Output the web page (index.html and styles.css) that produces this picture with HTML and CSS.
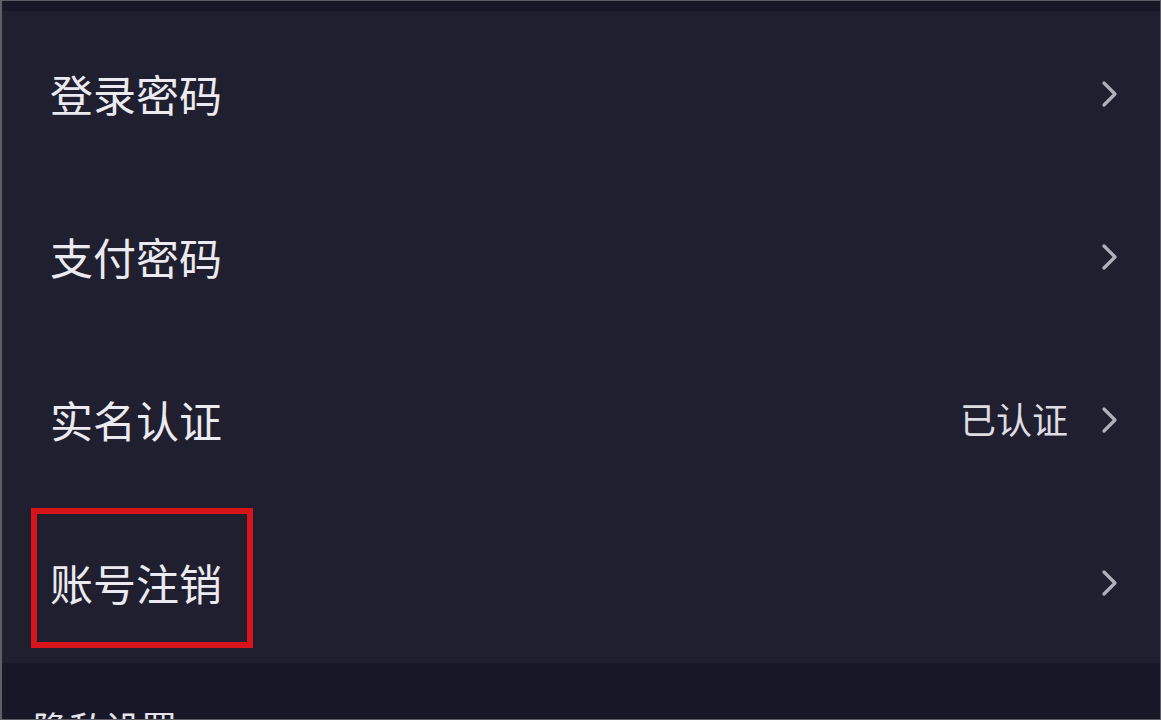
FILE: index.html
```
<!DOCTYPE html>
<html lang="zh-CN">
<head>
<meta charset="utf-8"/>
<title>账号与安全</title>
<link rel="stylesheet" href="styles.css">
</head>
<body>
<div class="frame">
  <div class="top-gap"></div>
  <div class="panel">
    <div class="row">
      <span class="label">登录密码</span>
      <span class="right">
        <svg class="chev" viewBox="0 0 20 28" width="20" height="28"><path d="M4 3 L15 14 L4 25" fill="none" stroke="#b0afba" stroke-width="3.2" stroke-linecap="round" stroke-linejoin="round"/></svg>
      </span>
    </div>
    <div class="row">
      <span class="label">支付密码</span>
      <span class="right">
        <svg class="chev" viewBox="0 0 20 28" width="20" height="28"><path d="M4 3 L15 14 L4 25" fill="none" stroke="#b0afba" stroke-width="3.2" stroke-linecap="round" stroke-linejoin="round"/></svg>
      </span>
    </div>
    <div class="row">
      <span class="label">实名认证</span>
      <span class="right">
        <span class="value">已认证</span>
        <svg class="chev" viewBox="0 0 20 28" width="20" height="28"><path d="M4 3 L15 14 L4 25" fill="none" stroke="#b0afba" stroke-width="3.2" stroke-linecap="round" stroke-linejoin="round"/></svg>
      </span>
    </div>
    <div class="row">
      <span class="label">账号注销</span>
      <span class="right">
        <svg class="chev" viewBox="0 0 20 28" width="20" height="28"><path d="M4 3 L15 14 L4 25" fill="none" stroke="#b0afba" stroke-width="3.2" stroke-linecap="round" stroke-linejoin="round"/></svg>
      </span>
      <div class="highlight"></div>
    </div>
  </div>
  <div class="section-title">隐私设置</div>
</div>
</body>
</html>
```
FILE: styles.css
```
html, body {
    margin: 0;
    padding: 0;
    background-color: #181727;
}
body {
    font-family: "Noto Sans CJK SC", "Noto Sans", sans-serif;
    color: #ebeaf0;
}
.frame {
    box-sizing: border-box;
    width: 1161px;
    height: 720px;
    overflow: hidden;
    background-color: #181727;
    border: 1px solid #5e5d68;
    border-left-width: 2px;
}
.top-gap {
    height: 10px;
}
.panel {
    background-color: #201f2f;
}
.row {
    position: relative;
    display: flex;
    align-items: center;
    justify-content: space-between;
    height: 163px;
    padding: 0 40px 0 48px;
}
.label {
    font-size: 43px;
    line-height: 1;
    margin-top: 1px;
}
.right {
    display: flex;
    align-items: center;
    margin-top: 2px;
}
.value {
    font-size: 36px;
    line-height: 1;
    color: #dddce3;
    margin-right: 32px;
    margin-top: -3px;
}
.chev {
    display: block;
}
.highlight {
    position: absolute;
    left: 29px;
    top: 8px;
    width: 210px;
    height: 128px;
    border: 6px solid #d8141b;
}
.section-title {
    font-size: 36px;
    line-height: 1;
    padding-left: 31px;
    margin-top: 46px;
    color: #e4e3ea;
}
```
